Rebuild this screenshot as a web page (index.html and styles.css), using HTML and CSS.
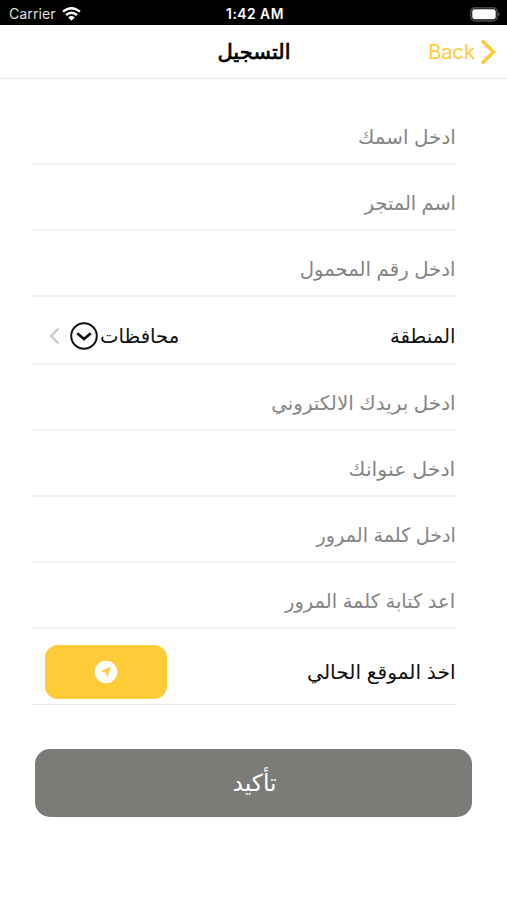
FILE: index.html
```html
<!DOCTYPE html>
<html lang="ar" dir="rtl">
<head>
<meta charset="utf-8">
<title>التسجيل</title>
<link rel="stylesheet" href="styles.css">
</head>
<body>
<div class="status" dir="ltr">
  <div class="carrier"><span>Carrier</span>
    <svg width="19" height="14" viewBox="0 0 19 14" fill="none" stroke="#fff" stroke-width="2.3"><path d="M1 4.7Q9.5-2.3 18 4.7M4 8Q9.5 3.4 15 8"/><path d="M6.3 10.4Q9.5 7.8 12.7 10.4L9.5 13.7Z" fill="#fff" stroke="none"/></svg>
  </div>
  <div class="clock">1:42 AM</div>
  <svg class="battery" width="31" height="15" viewBox="0 0 31 15"><rect x=".8" y=".8" width="26.4" height="13" rx="4" fill="none" stroke="#59595b" stroke-width="1.3"/><rect x="2.3" y="2.3" width="23.4" height="10" rx="2.3" fill="#fff"/><path d="M28.3 5Q30.8 7.3 28.3 9.6Z" fill="#59595b"/></svg>
</div>
<header class="nav" dir="ltr">
  <h1 dir="rtl">التسجيل</h1>
  <a class="back"><span>Back</span><svg width="17" height="26" viewBox="0 0 17 26" fill="none" stroke="#ffcb38" stroke-width="3.6"><path d="M2 1.5L13.5 13L2 24.5"/></svg></a>
</header>
<main>
  <div class="row name"><span>ادخل اسمك</span></div>
  <div class="row store"><span>اسم المتجر</span></div>
  <div class="row"><span>ادخل رقم المحمول</span></div>
  <div class="row region"><span>المنطقة</span>
    <div class="picker"><span>محافظات</span>
      <svg width="28" height="28" viewBox="0 0 28 28" fill="none" stroke="#111"><circle cx="14" cy="14" r="12.8" stroke-width="2"/><path d="M7.2 11.3L14 17L20.8 11.3" stroke-width="2.7"/></svg>
      <svg class="chevron" width="11" height="18" viewBox="0 0 11 18" fill="none" stroke="#c4c4c6" stroke-width="2"><path d="M9.5 1.5L2 9L9.5 16.5"/></svg>
    </div>
  </div>
  <div class="row email"><span>ادخل بريدك الالكتروني</span></div>
  <div class="row address"><span>ادخل عنوانك</span></div>
  <div class="row password"><span>ادخل كلمة المرور</span></div>
  <div class="row repeat"><span>اعد كتابة كلمة المرور</span></div>
  <div class="row location"><span>اخذ الموقع الحالي</span>
    <button class="locate" aria-label="اخذ الموقع الحالي"><svg width="24" height="24" viewBox="0 0 24 24"><circle cx="12" cy="12" r="11.3" fill="#fff"/><path d="M17.2 6.7L13 17.8L11.8 12.4L6.4 11.2Z" fill="#ffcb38"/></svg></button>
  </div>
  <button class="submit"><span>تأكيد</span></button>
</main>
</body>
</html>
```

FILE: styles.css
```css
* { box-sizing: border-box; }
body { margin: 0; background: #fff; color: #111; font-family: Inter, "DejaVu Sans", sans-serif; }
svg { display: block; flex: none; }
button { border: 0; padding: 0; font: inherit; }
.status { display: grid; grid-template-columns: 1fr auto 1fr; align-items: center; height: 25px; padding: 2px 6px 0 9px; background: #000; color: #fff; font-size: 14.2px; line-height: 24px; }
.carrier { display: flex; align-items: center; gap: 6px; color: #ddd; }
.clock { font-size: 13.8px; font-weight: 600; letter-spacing: .5px; }
.battery { justify-self: end; }
.nav { display: grid; grid-template-columns: 1fr auto 1fr; align-items: center; height: 54px; padding-right: 10px; border-bottom: 1px solid #ebebeb; }
.nav h1 { grid-column: 2; margin: 1px -11px 0 0; font-size: 21px; line-height: 30px; font-weight: 400; -webkit-text-stroke: .7px #000; color: #000; }
.back { justify-self: end; display: flex; align-items: center; gap: 5px; color: #ffcb38; font-size: 20px; }
main { padding: 20px 35px 0 32px; }
.row { display: flex; align-items: center; justify-content: space-between; height: 66px; margin-right: 16px; padding: 12px .5px 0 0; border-bottom: 2px solid #f3f3f3; color: #858585; font-size: 19.7px; line-height: 30px; white-space: nowrap; }
.row > span { transform-origin: right; }
.name > span { transform: scaleX(1.01); }
.store > span { transform: scaleX(.98); }
.email > span { transform: scaleX(1.01); }
.address > span { transform: scaleX(1.043); }
.password > span { transform: scaleX(.975); }
.repeat > span { transform: scaleX(.988); }
.location > span { transform: scaleX(1.027); }
.region { height: 68px; color: #111; }
.picker { display: flex; align-items: center; gap: 2px; padding-left: 17px; }
.chevron { margin-right: 8px; }
.location { height: 76px; padding-top: 11px; border-bottom-width: 1px; border-color: #e8e8e8; color: #111; }
.locate { display: grid; place-items: center; width: 122px; height: 54px; margin-left: 13px; border-radius: 13px; background: #ffcb38; }
.submit { display: block; width: 437px; height: 68px; margin: 44px 0 0; padding: 0 0 2px 2px; border-radius: 15px; background: #7b7b78; color: #fff; font-size: 23.4px; }
```
